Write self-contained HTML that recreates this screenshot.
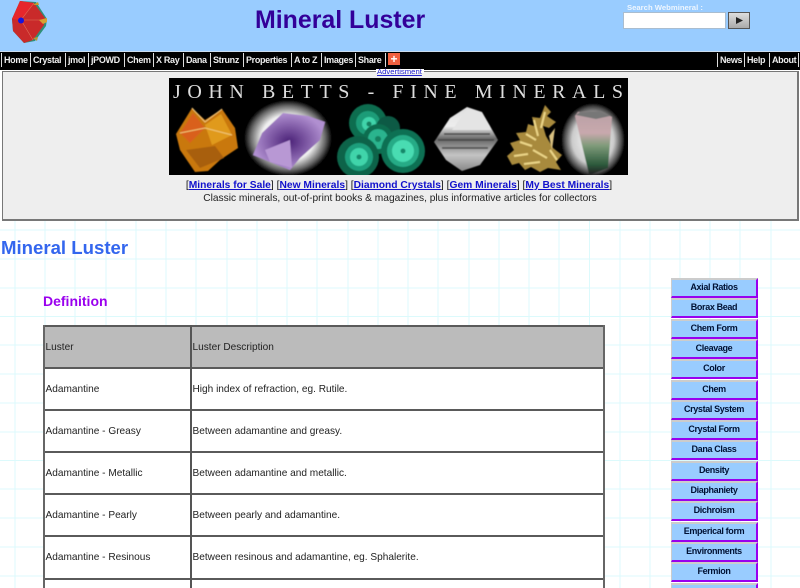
<!DOCTYPE html>
<html><head><meta charset="utf-8"><title>Mineral Luster</title>
<style>
html,body{margin:0;padding:0;width:800px;height:588px;overflow:hidden;background:#fff;font-family:"Liberation Sans",Arial,sans-serif;}
#page{position:relative;width:800px;height:588px;overflow:hidden;background:#fff;}
.a{position:absolute;white-space:nowrap;}
#nav span{position:absolute;top:53px;height:14px;line-height:14px;font-size:9px;letter-spacing:-.33px;font-weight:bold;color:#eee;border-left:1px solid #ddd;padding-left:2px;}
.b{position:absolute;left:671px;width:84px;height:16px;background:#99ccff;border-top:2px solid #ccc;border-left:1px solid #ccc;border-right:2px solid #9900ee;border-bottom:2px solid #9900ee;text-align:center;font-size:9px;letter-spacing:-.36px;font-weight:bold;line-height:15px;color:#001133;}
.t{position:absolute;font-size:10.1px;color:#222;white-space:nowrap;line-height:12px;}
.hl{position:absolute;left:43px;width:562px;height:2px;background:#5a5a5a;}
a{color:#1111cc;font-weight:bold;text-decoration:underline;}
</style></head><body><div id="page">
<svg class="a" style="left:0;top:0" width="800" height="588">
<g stroke="#dcfafc" stroke-width="1">
<path d="M15 220V588M45 220V588M75 220V588M106 220V588M136 220V588M166 220V588M196 220V588M227 220V588M257 220V588M287 220V588M317 220V588M348 220V588M378 220V588M408 220V588M438 220V588M469 220V588M499 220V588M529 220V588M559 220V588M589.500 220V588M620 220V588M650 220V588M680 220V588M710 220V588M740 220V588M771 220V588"/>
<path d="M0 230H800M0 259H800M0 288H800M0 316.500H800M0 345H800M0 374H800M0 403H800M0 432H800M0 460.500H800M0 489H800M0 518H800M0 547H800M0 576H800"/>
</g></svg>

<div class="a" style="left:0;top:0;width:800px;height:51px;background:#99ccff"></div>
<svg class="a" style="left:10px;top:0" width="40" height="44" viewBox="10 0 40 44">
<polygon points="20,1 36,2 47,19 46,26 35,41 24,43 13,31 12,19" fill="#2f8f78"/>
<polygon points="20,1 34,3 45,18 44,25 33,40 24,43 13,31 12,19" fill="#c92a2a"/>
<polygon points="20,1 34,3 21,20 12,19" fill="#e6262c"/>
<path d="M21 20L44 20M21 20L33 40M21 20L34 3" stroke="#e07058" stroke-width=".6" fill="none"/>
<polygon points="33,5 38,2 39,5" fill="#c99a2a"/>
<polygon points="39,20 47,18 47,22 43,24" fill="#d8a030"/>
<polygon points="33,38 38,37 37,41" fill="#b59a35"/>
<circle cx="21" cy="20.500" r="3" fill="#1414e0"/>
</svg>
<div class="a" style="left:255px;top:5px;font-size:24.9px;font-weight:bold;color:#330099;line-height:30px">Mineral Luster</div>
<div class="a" style="left:627px;top:3px;font-size:7.7px;font-weight:bold;color:#eef6ff;line-height:9px">Search Webmineral :</div>
<div class="a" style="left:623px;top:12px;width:101px;height:15px;background:#fff;border:1px solid #a9bdd0"></div>
<div class="a" style="left:728px;top:12px;width:20px;height:15px;background:linear-gradient(#ddd,#aaa);border:1px solid #555"></div>
<svg class="a" style="left:735px;top:16px" width="9" height="9"><polygon points="1,1 8,4.500 1,8" fill="#222"/></svg>

<div class="a" style="left:0;top:51px;width:800px;height:18px;background:#000;border-top:1px solid #cde"></div>
<div id="nav">
<span style="left:1px">Home</span><span style="left:30px">Crystal</span><span style="left:65px">jmol</span><span style="left:88px">jPOWD</span><span style="left:124px">Chem</span><span style="left:153px">X Ray</span><span style="left:183px">Dana</span><span style="left:210px">Strunz</span><span style="left:243px">Properties</span><span style="left:291px">A to Z</span><span style="left:321px">Images</span><span style="left:355px">Share</span>
<span style="left:385px"></span>
<span style="left:717px">News</span><span style="left:744px">Help</span><span style="left:769px">About</span><span style="left:798px"></span>
</div>
<div class="a" style="left:388px;top:53px;width:12px;height:12px;background:#f0603f;color:#fff;font:bold 12px/12px 'Liberation Sans',sans-serif;text-align:center">+</div>

<div class="a" style="left:2px;top:71px;width:794px;height:147px;background:#eeeeee;border:1px solid #777;border-bottom-width:2px;border-right-width:2px"></div>
<div class="a" style="left:376px;top:69px;width:48px;height:4px;background:#fff"></div>
<div class="a" style="left:377px;top:67px;font-size:7.7px;line-height:9px;color:#2222cc;text-decoration:underline">Advertisment</div>

<svg class="a" style="left:169px;top:78px" width="459" height="97" viewBox="169 78 459 97">
<defs>
<radialGradient id="g1"><stop offset="0" stop-color="#fff"/><stop offset=".6" stop-color="#f0f0f0"/><stop offset=".85" stop-color="#666"/><stop offset="1" stop-color="#000"/></radialGradient>
<radialGradient id="g2"><stop offset="0" stop-color="#fff"/><stop offset=".65" stop-color="#ccc"/><stop offset=".9" stop-color="#444"/><stop offset="1" stop-color="#000"/></radialGradient>
<radialGradient id="p"><stop offset="0" stop-color="#4b2278"/><stop offset="1" stop-color="#b08fd0"/></radialGradient>
<linearGradient id="to" x1="0" y1="0" x2="0" y2="1"><stop offset="0" stop-color="#b9a0a5"/><stop offset=".35" stop-color="#c8a9ad"/><stop offset=".55" stop-color="#7f9b7a"/><stop offset=".85" stop-color="#2d5a3c"/><stop offset="1" stop-color="#222"/></linearGradient>
<linearGradient id="di" x1="0" y1="0" x2="0" y2="1"><stop offset="0" stop-color="#ddd"/><stop offset=".3" stop-color="#eee"/><stop offset=".5" stop-color="#666"/><stop offset=".75" stop-color="#c4c4c4"/><stop offset="1" stop-color="#888"/></linearGradient>
<filter id="s"><feGaussianBlur stdDeviation=".5"/></filter>
</defs>
<rect x="169" y="78" width="459" height="97" fill="#000"/>
<g filter="url(#s)">
<polygon points="176,134 192,108 205,120 222,109 235,128 238,148 220,160 208,171 195,172 180,150" fill="#c9780f"/>
<polygon points="180,133 193,113 205,128 190,143" fill="#d9601a"/>
<polygon points="205,125 221,114 232,135 212,145" fill="#e09a1c"/>
<polygon points="186,150 215,146 224,158 200,168" fill="#a85f10"/>
<path d="M192 108L205 122L222 109M180 133L205 128L232 135" stroke="#f0c878" fill="none"/>
<ellipse cx="288" cy="138" rx="44" ry="38" fill="url(#g1)"/>
<polygon points="262,133 283,113 308,116 325,122 320,140 300,158 290,170 270,162 253,155" fill="url(#p)"/>
<polygon points="265,150 290,140 292,168 270,162" fill="#b898d4"/>
<circle cx="368" cy="123" r="19" fill="#0f6d50"/><circle cx="368" cy="123" r="12" fill="#1e9c78"/><circle cx="369" cy="124" r="7" fill="#3fd4aa"/><circle cx="369" cy="124" r="2.500" fill="#128060"/>
<circle cx="388" cy="128" r="12" fill="#0c5a44"/>
<circle cx="378" cy="139" r="15" fill="#0f6d50"/><circle cx="378" cy="139" r="10" fill="#2ab48e"/><circle cx="378" cy="139" r="3" fill="#128060"/>
<circle cx="358" cy="157" r="21" fill="#0d6449"/><circle cx="359" cy="157" r="14" fill="#1f9e7c"/><circle cx="359" cy="157" r="9" fill="#3fd4aa"/><circle cx="359" cy="157" r="2.500" fill="#16886a"/>
<circle cx="403" cy="151" r="22" fill="#0e6f53"/><circle cx="403" cy="151" r="16" fill="#25ab86"/><circle cx="403" cy="151" r="11" fill="#48dcb2"/><circle cx="403" cy="151" r="2.500" fill="#16886a"/>
<polygon points="467,107 482,112 498,140 480,165 462,171 446,160 434,142 450,118" fill="url(#di)"/>
<polygon points="467,109 482,113 491,130 452,130" fill="#e4e4e4"/>
<path d="M438 140H494M442 148H488M444 134H490" stroke="#444" stroke-width="1.500" fill="none"/>
<polygon points="545,105 551,112 547,116 556,122 549,128 543,126 546,136 553,148 562,155 556,162 561,170 548,168 540,172 531,167 525,170 519,163 512,165 507,156 514,150 510,143 520,140 516,133 526,132 528,124 534,126 532,117 540,118" fill="#a88a3c"/>
<path d="M534 120L538 136M520 142L532 146M514 156L528 154M545 112L541 128M533 150L547 158M524 164L540 162M550 150L557 160M526 134L536 140" stroke="#ecd688" stroke-width="2" fill="none"/>
<polygon points="549,136 555,128 552,150" fill="#d8c080"/>
<ellipse cx="593" cy="140" rx="32" ry="37" fill="url(#g2)"/>
<polygon points="575,116 578,112 600,111 612,117 608,168 592,174 589,174" fill="url(#to)"/>
<polygon points="576,115 580,112 600,111 610,116 596,119" fill="#777"/>
</g>
<text x="173" y="98" font-family="'Liberation Serif',serif" font-size="20" fill="#ddd" textLength="450" lengthAdjust="spacing">JOHN BETTS - FINE MINERALS</text>
</svg>

<div class="a" style="left:-1px;top:179px;width:800px;text-align:center;font-size:10.27px;line-height:13px;color:#111">[<a>Minerals for Sale</a>] [<a>New Minerals</a>] [<a>Diamond Crystals</a>] [<a>Gem Minerals</a>] [<a>My Best Minerals</a>]</div>
<div class="a" style="left:0;top:192px;width:800px;text-align:center;font-size:10.2px;line-height:13px;color:#222">Classic minerals, out-of-print books &amp; magazines, plus informative articles for collectors</div>

<div class="a" style="left:1px;top:236px;font-size:18.6px;font-weight:bold;color:#3366ee;line-height:23px">Mineral Luster</div>
<div class="a" style="left:43px;top:292px;font-size:14px;font-weight:bold;color:#9900ee;line-height:18px">Definition</div>

<div class="a" style="left:43px;top:325px;width:562px;height:43px;background:#bbbbbb"></div>
<div class="a" style="left:43px;top:368px;width:562px;height:220px;background:#fff"></div>
<div class="hl" style="top:325px"></div><div class="hl" style="top:367px"></div><div class="hl" style="top:409px"></div><div class="hl" style="top:451px"></div><div class="hl" style="top:493px"></div><div class="hl" style="top:535px"></div><div class="hl" style="top:578px"></div>
<div class="a" style="left:43px;top:325px;width:2px;height:263px;background:#666"></div>
<div class="a" style="left:190px;top:325px;width:2px;height:263px;background:#555"></div>
<div class="a" style="left:603px;top:325px;width:2px;height:263px;background:#666"></div>

<div class="t" style="left:45.500px;top:342px">Luster</div><div class="t" style="left:192.500px;top:342px">Luster Description</div>
<div class="t" style="left:45.500px;top:384px">Adamantine</div><div class="t" style="left:192.500px;top:384px">High index of refraction, eg. Rutile.</div>
<div class="t" style="left:45.500px;top:426px">Adamantine - Greasy</div><div class="t" style="left:192.500px;top:426px">Between adamantine and greasy.</div>
<div class="t" style="left:45.500px;top:468px">Adamantine - Metallic</div><div class="t" style="left:192.500px;top:468px">Between adamantine and metallic.</div>
<div class="t" style="left:45.500px;top:510px">Adamantine - Pearly</div><div class="t" style="left:192.500px;top:510px">Between pearly and adamantine.</div>
<div class="t" style="left:45.500px;top:552px">Adamantine - Resinous</div><div class="t" style="left:192.500px;top:552px">Between resinous and adamantine, eg. Sphalerite.</div>

<div class="b" style="top:278px">Axial Ratios</div>
<div class="b" style="top:298.300px">Borax Bead</div>
<div class="b" style="top:318.600px">Chem Form</div>
<div class="b" style="top:338.900px">Cleavage</div>
<div class="b" style="top:359.200px">Color</div>
<div class="b" style="top:379.500px">Chem</div>
<div class="b" style="top:399.800px">Crystal System</div>
<div class="b" style="top:420.100px">Crystal Form</div>
<div class="b" style="top:440.400px">Dana Class</div>
<div class="b" style="top:460.700px">Density</div>
<div class="b" style="top:481px">Diaphaniety</div>
<div class="b" style="top:501.300px">Dichroism</div>
<div class="b" style="top:521.600px">Emperical form</div>
<div class="b" style="top:541.900px">Environments</div>
<div class="b" style="top:562.200px">Fermion</div>
<div class="b" style="top:582.500px"></div>
</div></body></html>
